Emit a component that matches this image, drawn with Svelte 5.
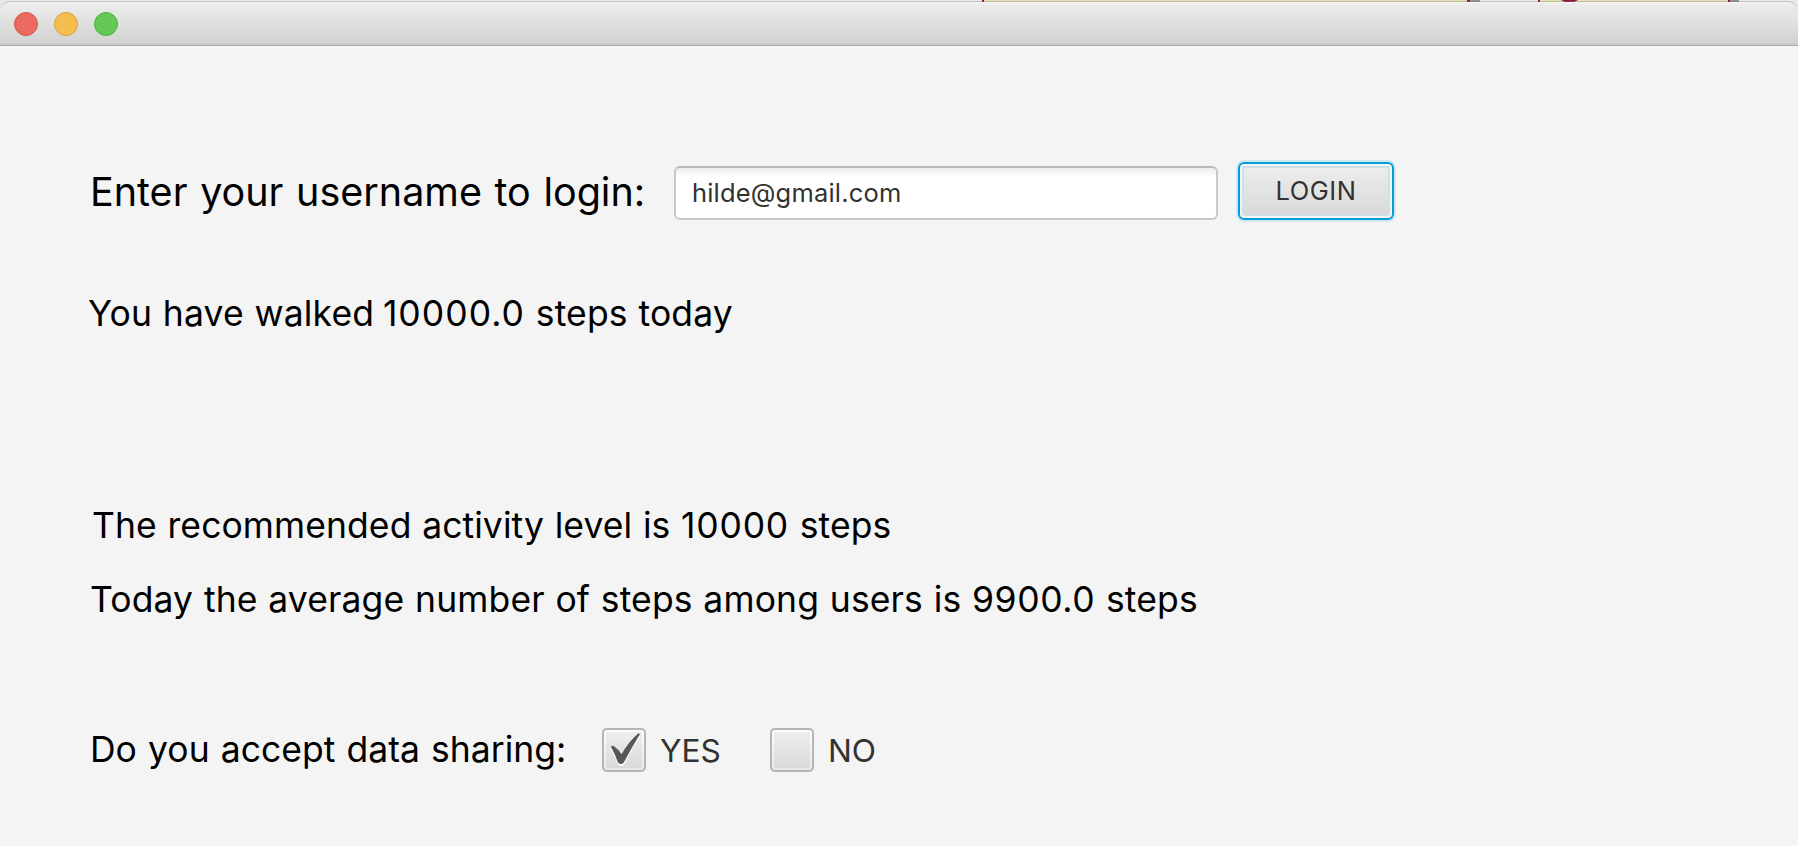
<script>
  let username = $state('hilde@gmail.com');
  let sharing = $state('YES');
</script>

<div class="window">
  <svg class="backdrop" width="1798" height="14" viewBox="0 0 1798 14" aria-hidden="true">
    <rect width="1798" height="14" fill="#e9e9e9" />
    <rect x="983" width="485" height="3" fill="#e5e1b5" />
    <rect x="1540" width="188" height="3" fill="#e5e1b5" />
    <path d="M982 0h2v3h-2zM1467 0h3v3h-3zM1538 0h2v3h-2zM1728 0h2v3h-2zM1561 0h17l-4 2h-9z" fill="#8f1c38" />
    <path d="M1470 0h10v2h-10zM1730 0h9v2h-9z" fill="#929292" />
  </svg>
  <header class="titlebar">
    <i class="light close"></i><i class="light minimise"></i><i class="light expand"></i>
  </header>
  <main>
    <form class="login">
      <label class="prompt" for="user">Enter your username to login:</label>
      <input id="user" type="text" bind:value={username} />
      <button type="button"><span>LOGIN</span></button>
    </form>
    <p class="walked">You have walked <span class="count">10000.0</span> steps today</p>
    <p class="advice">The recommended activity level is <span class="count">10000</span> steps</p>
    <p class="average">Today the average number of steps among users is <span class="count">9900.0</span> steps</p>
    <div class="sharing">
      <span class="question">Do you accept data sharing:</span>
      {#each ['YES', 'NO'] as option}
        <button type="button" class="option" onclick={() => (sharing = option)}>
          <span class="box">
            {#if sharing === option}
              <svg width="32" height="36" viewBox="0 0 32 36">
                <path d="M2 15L4.5 14Q9 17 12.5 22.5Q20 9 29.5 1.5L31 2.5Q23 15 15 31Q12 34 9 31Q6.5 24 2 15Z" fill="#fff" transform="translate(0 1.8)" />
                <path d="M2 14.5Q3 13 5 14.3Q9 17 12.5 22.2Q20 9 29.5 1.2L31 2Q23 15 14.8 30.5Q12 33.5 9 30.5Q6.5 23.5 2 14.5Z" fill="#575757" />
              </svg>
            {/if}
          </span>
          <span class="choice">{option}</span>
        </button>
      {/each}
    </div>
  </main>
</div>

<style>
  :global(body) { margin: 0; background: #f4f4f4; }
  .window { position: relative; width: 1798px; height: 846px; overflow: hidden; background: #f4f4f4; font-family: Inter, "Liberation Sans", sans-serif; color: #000; }
  .backdrop { position: absolute; left: 0; top: 0; }
  .titlebar { position: relative; box-sizing: border-box; height: 45px; margin-top: 1px; padding: 2px 0 1px 14px; display: flex; align-items: center; gap: 16px; border-top: 1px solid rgba(110, 110, 110, 0.32); border-bottom: 1px solid #ababab; border-radius: 10px 10px 0 0; background: linear-gradient(#f7f7f7, #ececec 2px, #d2d2d2 41px, #c5c5c5) padding-box; }
  .light { box-sizing: border-box; width: 24px; height: 24px; border-radius: 50%; border: 1px solid; }
  .close { background: #ec6b60; border-color: #d9544c; }
  .minimise { background: #f5bf4f; border-color: #dca03c; }
  .expand { background: #64c956; border-color: #50ac40; }
  main { padding: 113px 0 0 90px; }
  .login { display: flex; height: 64px; align-items: center; }
  .prompt { width: 584px; padding-top: 2px; font-size: 39.5px; line-height: 48px; word-spacing: 1.5px; white-space: nowrap; }
  input { box-sizing: border-box; width: 544px; height: 54px; margin-top: 4px; padding: 0 16px 2px; border: 2px solid #c8c8c8; border-top-color: #b8b8b8; border-radius: 6px; outline: none; background: linear-gradient(#ededed, #fff 9px); font: 25.5px Inter, "Liberation Sans", sans-serif; letter-spacing: 0.18px; color: #323232; }
  button { padding: 0; border: 0; background: none; font-family: inherit; color: #323232; }
  .login button { box-sizing: border-box; width: 156px; height: 58px; margin-left: 20px; border: 2px solid #039ed3; border-radius: 6px; box-shadow: 0 0 0 2px #cfe7f1, inset 0 0 0 2px #f4f4f4, inset 0 0 0 4px #cde0e7; background: linear-gradient(#eee, #d8d8d8); font-size: 25.5px; line-height: 30px; letter-spacing: 0.5px; }
  p { margin: 0; font-size: 35.5px; line-height: 44px; white-space: nowrap; }
  .walked { margin: 69px 0 0 -2px; letter-spacing: 0.15px; word-spacing: 0.6px; }
  .walked .count { margin-left: -2px; letter-spacing: 1.05px; }
  .advice { margin: 168px 0 0 2px; letter-spacing: 0.08px; word-spacing: 0.6px; }
  .advice .count { letter-spacing: 0.8px; }
  .average { margin: 30px 0 0 0; letter-spacing: 0.13px; word-spacing: 0.6px; }
  .average .count { letter-spacing: 0.6px; }
  .sharing { display: flex; align-items: center; height: 44px; margin-top: 106px; }
  .question { width: 512px; font-size: 35.5px; line-height: 44px; word-spacing: 1.2px; white-space: nowrap; }
  .option { display: flex; align-items: center; width: 168px; gap: 14px; font-size: 31.7px; line-height: 40px; text-align: left; }
  .choice { padding-top: 2px; }
  .box { box-sizing: border-box; width: 44px; height: 44px; padding: 2px; border: 2px solid #b5b5b5; border-radius: 5px; background: linear-gradient(#eee, #d9d9d9) content-box, linear-gradient(#fff, #e8e8e8); }
  .box svg { display: block; margin: 0 0 0 3px; }
</style>
